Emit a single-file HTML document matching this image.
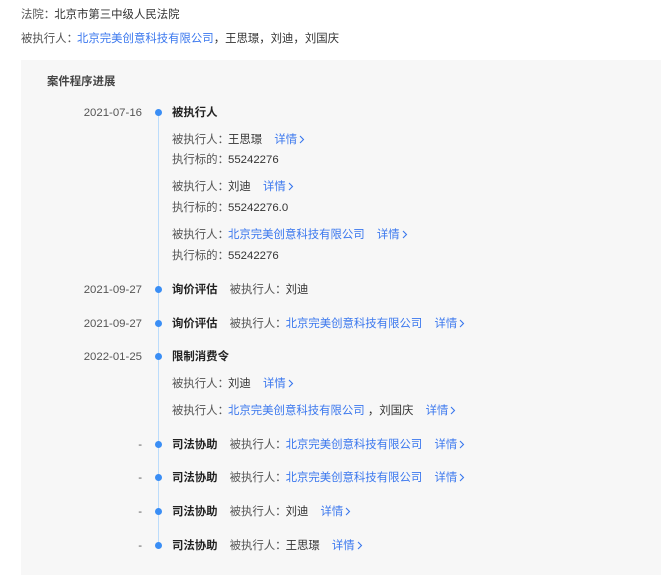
<!DOCTYPE html>
<html><head><meta charset="utf-8"><style>
body{margin:0;width:661px;height:575px;background:#fff;font-family:"Liberation Sans","Noto Sans CJK SC",sans-serif;font-size:11.4px;color:#333;position:relative;overflow:hidden}
.a{position:absolute;line-height:18px;white-space:nowrap;margin-top:1px}
.panel{position:absolute;left:21px;top:60px;width:640px;height:515px;background:#f7f7f7}
.g{color:#555}
.b{color:#3a77ee}
.d{color:#555;width:60px;text-align:right;left:82px}
.dot{position:absolute;left:155px;width:7px;height:7px;border-radius:50%;background:#3a8ef5}
.line{position:absolute;left:158px;top:112px;width:1px;height:433px;background:#bcdcfb}
.t{font-weight:bold;color:#222;margin-right:12px}
.m{margin-left:9px}
.c{margin-right:-1px}
svg{vertical-align:-1px;margin-left:2px}
</style></head><body>
<div class="a" style="left:21px;top:5px"><span class="g">法院<span class="c">：</span></span>北京市第三中级人民法院</div>
<div class="a" style="left:21px;top:29px"><span class="g">被执行人<span class="c">：</span></span><span class="b">北京完美创意科技有限公司</span>，王思璟，刘迪，刘国庆</div>
<div class="panel"></div>
<div class="a" style="left:47px;top:72px;color:#444;font-weight:bold">案件程序进展</div>
<div class="line"></div>

<div class="a d" style="top:103px">2021-07-16</div><div class="dot" style="top:109px"></div>
<div class="a" style="left:172px;top:103px;font-weight:bold;color:#222">被执行人</div>
<div class="a" style="left:172px;top:130px"><span class="g">被执行人<span class="c">：</span></span>王思璟 <span class="b m">详情<svg width="6" height="9" viewBox="0 0 6 9"><path d="M1 1l3.5 3.5L1 8" fill="none" stroke="#3a77ee" stroke-width="1.1"/></svg></span></div>
<div class="a" style="left:172px;top:150px"><span class="g">执行标的<span class="c">：</span></span>55242276</div>
<div class="a" style="left:172px;top:177px"><span class="g">被执行人<span class="c">：</span></span>刘迪 <span class="b m">详情<svg width="6" height="9" viewBox="0 0 6 9"><path d="M1 1l3.5 3.5L1 8" fill="none" stroke="#3a77ee" stroke-width="1.1"/></svg></span></div>
<div class="a" style="left:172px;top:198px"><span class="g">执行标的<span class="c">：</span></span>55242276.0</div>
<div class="a" style="left:172px;top:225px"><span class="g">被执行人<span class="c">：</span></span><span class="b">北京完美创意科技有限公司</span> <span class="b m">详情<svg width="6" height="9" viewBox="0 0 6 9"><path d="M1 1l3.5 3.5L1 8" fill="none" stroke="#3a77ee" stroke-width="1.1"/></svg></span></div>
<div class="a" style="left:172px;top:246px"><span class="g">执行标的<span class="c">：</span></span>55242276</div>

<div class="a d" style="top:280px">2021-09-27</div><div class="dot" style="top:286px"></div>
<div class="a" style="left:172px;top:280px"><span class="t">询价评估</span><span class="g">被执行人<span class="c">：</span></span>刘迪</div>
<div class="a d" style="top:314px">2021-09-27</div><div class="dot" style="top:320px"></div>
<div class="a" style="left:172px;top:314px"><span class="t">询价评估</span><span class="g">被执行人<span class="c">：</span></span><span class="b">北京完美创意科技有限公司</span> <span class="b m">详情<svg width="6" height="9" viewBox="0 0 6 9"><path d="M1 1l3.5 3.5L1 8" fill="none" stroke="#3a77ee" stroke-width="1.1"/></svg></span></div>

<div class="a d" style="top:347px">2022-01-25</div><div class="dot" style="top:353px"></div>
<div class="a" style="left:172px;top:347px;font-weight:bold;color:#222">限制消费令</div>
<div class="a" style="left:172px;top:374px"><span class="g">被执行人<span class="c">：</span></span>刘迪 <span class="b m">详情<svg width="6" height="9" viewBox="0 0 6 9"><path d="M1 1l3.5 3.5L1 8" fill="none" stroke="#3a77ee" stroke-width="1.1"/></svg></span></div>
<div class="a" style="left:172px;top:401px"><span class="g">被执行人<span class="c">：</span></span><span class="b">北京完美创意科技有限公司</span> ，刘国庆 <span class="b m">详情<svg width="6" height="9" viewBox="0 0 6 9"><path d="M1 1l3.5 3.5L1 8" fill="none" stroke="#3a77ee" stroke-width="1.1"/></svg></span></div>

<div class="a d" style="top:435px">-</div><div class="dot" style="top:441px"></div>
<div class="a" style="left:172px;top:435px"><span class="t">司法协助</span><span class="g">被执行人<span class="c">：</span></span><span class="b">北京完美创意科技有限公司</span> <span class="b m">详情<svg width="6" height="9" viewBox="0 0 6 9"><path d="M1 1l3.5 3.5L1 8" fill="none" stroke="#3a77ee" stroke-width="1.1"/></svg></span></div>
<div class="a d" style="top:468px">-</div><div class="dot" style="top:474px"></div>
<div class="a" style="left:172px;top:468px"><span class="t">司法协助</span><span class="g">被执行人<span class="c">：</span></span><span class="b">北京完美创意科技有限公司</span> <span class="b m">详情<svg width="6" height="9" viewBox="0 0 6 9"><path d="M1 1l3.5 3.5L1 8" fill="none" stroke="#3a77ee" stroke-width="1.1"/></svg></span></div>
<div class="a d" style="top:502px">-</div><div class="dot" style="top:508px"></div>
<div class="a" style="left:172px;top:502px"><span class="t">司法协助</span><span class="g">被执行人<span class="c">：</span></span>刘迪 <span class="b m">详情<svg width="6" height="9" viewBox="0 0 6 9"><path d="M1 1l3.5 3.5L1 8" fill="none" stroke="#3a77ee" stroke-width="1.1"/></svg></span></div>
<div class="a d" style="top:536px">-</div><div class="dot" style="top:542px"></div>
<div class="a" style="left:172px;top:536px"><span class="t">司法协助</span><span class="g">被执行人<span class="c">：</span></span>王思璟 <span class="b m">详情<svg width="6" height="9" viewBox="0 0 6 9"><path d="M1 1l3.5 3.5L1 8" fill="none" stroke="#3a77ee" stroke-width="1.1"/></svg></span></div>
</body></html>
